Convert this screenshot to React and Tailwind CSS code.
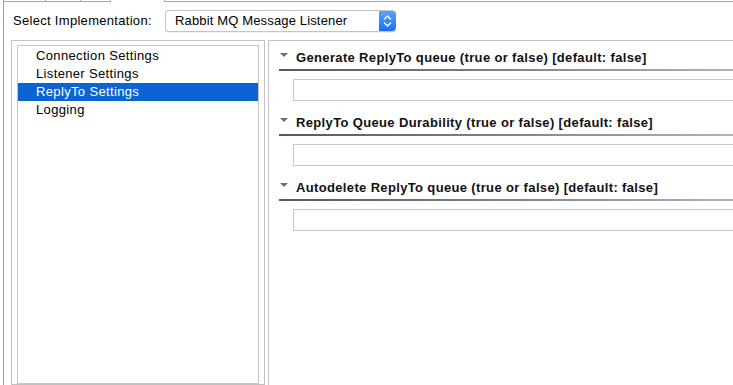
import React from 'react';

const fields = [
  'Generate ReplyTo queue (true or false) [default: false]',
  'ReplyTo Queue Durability (true or false) [default: false]',
  'Autodelete ReplyTo queue (true or false) [default: false]',
];

const items = ['Connection Settings', 'Listener Settings', 'ReplyTo Settings', 'Logging'];

function Stepper() {
  return (
    <div className="w-[17px] h-full rounded-r-[4px] bg-linear-to-b from-[#5aa2fb] to-[#1b6ff0] flex items-center justify-center">
      <svg width="9" height="14" viewBox="0 0 9 14" fill="none" stroke="white" strokeWidth="1.4" strokeLinecap="round" strokeLinejoin="round">
        <path d="M1.5 5 L4.5 2 L7.5 5" />
        <path d="M1.5 9 L4.5 12 L7.5 9" />
      </svg>
    </div>
  );
}

function Field({ label }) {
  return (
    <div className="h-[65px]">
      <div className="flex items-center h-[16px]">
        <svg width="8" height="5" viewBox="0 0 8 5" className="ml-[1px] mb-[5px] shrink-0">
          <path d="M0 0 L8 0 L4 4 Z" fill="#6e6e6e" />
        </svg>
        <span className="ml-[8px] text-[13px] tracking-[0.35px] font-bold text-[#111] whitespace-nowrap">{label}</span>
      </div>
      <div className="mt-[3px] h-[2px] bg-linear-to-r from-[#4e5a6c] via-[#7c8797] to-[#b3bcc7]" />
      <div className="mt-[8px] ml-[14px] h-[22px] border border-[#c8c8c8] bg-white" />
    </div>
  );
}

export default function App() {
  return (
    <div className="w-[733px] h-[385px] overflow-hidden bg-white font-['Liberation_Sans',Arial,sans-serif] text-[13px] text-black">
      <div className="ml-[3px] h-[385px] border-l border-[#9c9c9c] flex flex-col">
        <div className="flex h-[2px]">
          <div className="w-[42px] border-r border-b border-[#a8a8a8]" />
          <div className="w-[35px] border-r border-b border-[#a8a8a8]" />
          <div className="w-[30px] border-r border-b border-[#a8a8a8]" />
          <div className="w-[53px]" />
          <div className="flex-1 border-l border-b border-[#a8a8a8]" />
        </div>

        <div className="flex items-center mt-[8px] h-[22px]">
          <span className="ml-[9px] w-[152px] tracking-[0.3px]">Select Implementation:</span>
          <div className="w-[231px] h-[22px] flex rounded-[4px] border border-[#c4c4c4] border-r-0 bg-white shadow-[0_1px_0_rgba(0,0,0,0.05)]">
            <span className="flex-1 pl-[9px] leading-[20px] tracking-[0.15px]">Rabbit MQ Message Listener</span>
            <Stepper />
          </div>
        </div>

        <div className="flex mt-[8px] flex-1">
          <div className="ml-[7px] w-[254px] shrink-0 border border-[#c2c2c2] px-[5px] pt-[4px] flex">
            <div className="flex-1 border border-[#c6c6c6] pt-[1px]">
              {items.map((it) => (
                <div
                  key={it}
                  className={
                    it === 'ReplyTo Settings'
                      ? 'h-[18px] leading-[18px] pl-[18px] tracking-[0.35px] bg-[#0b64d2] text-white'
                      : 'h-[18px] leading-[18px] pl-[18px] tracking-[0.35px]'
                  }
                >
                  {it}
                </div>
              ))}
            </div>
          </div>
          <div className="ml-[3px] w-[500px] shrink-0 border-l border-t border-[#c2c2c2] pl-[10px] pt-[9px]">
            {fields.map((f) => (
              <Field key={f} label={f} />
            ))}
          </div>
        </div>
      </div>
    </div>
  );
}
